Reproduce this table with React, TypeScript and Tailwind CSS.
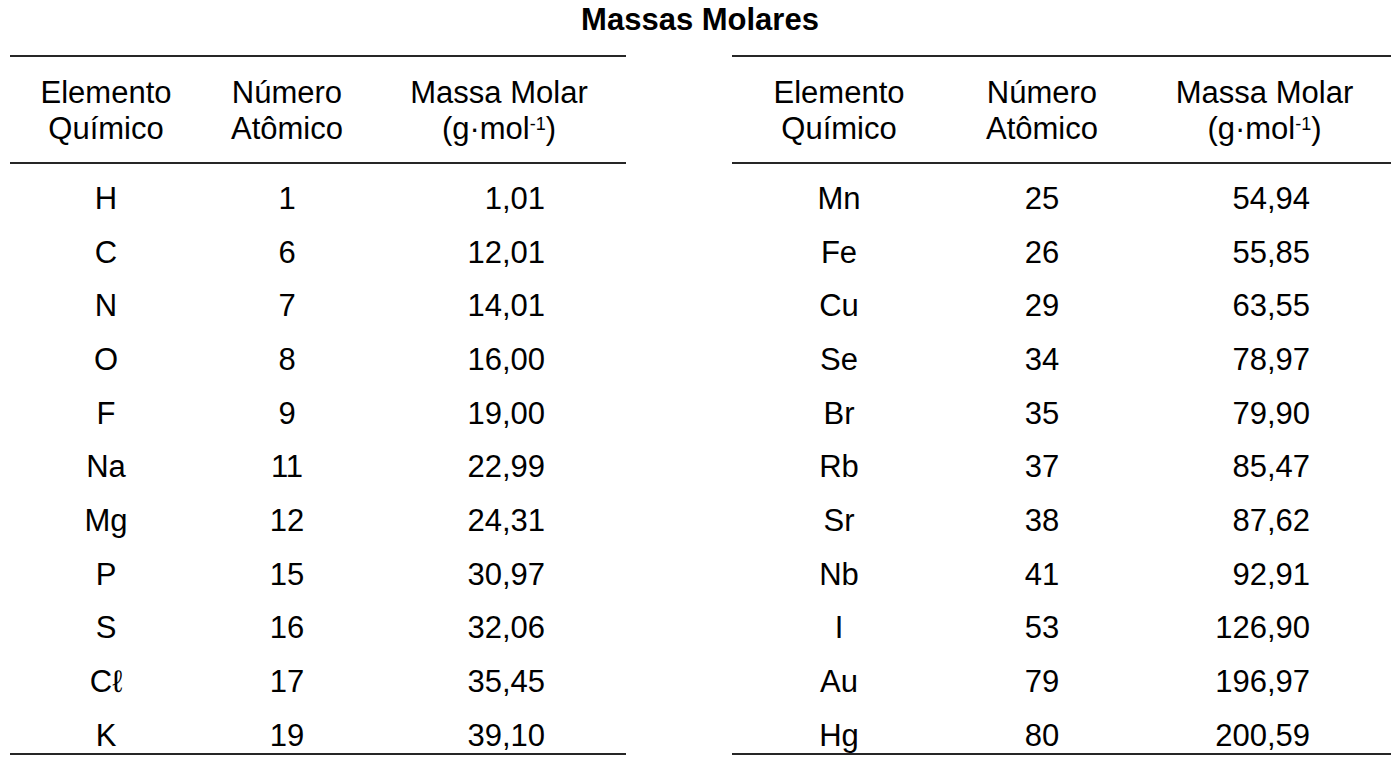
import React from "react";

type Row = { el: string; z: string; mass: string };

const leftRows: Row[] = [
  { el: "H", z: "1", mass: "1,01" },
  { el: "C", z: "6", mass: "12,01" },
  { el: "N", z: "7", mass: "14,01" },
  { el: "O", z: "8", mass: "16,00" },
  { el: "F", z: "9", mass: "19,00" },
  { el: "Na", z: "11", mass: "22,99" },
  { el: "Mg", z: "12", mass: "24,31" },
  { el: "P", z: "15", mass: "30,97" },
  { el: "S", z: "16", mass: "32,06" },
  { el: "C\u2113", z: "17", mass: "35,45" },
  { el: "K", z: "19", mass: "39,10" },
];

const rightRows: Row[] = [
  { el: "Mn", z: "25", mass: "54,94" },
  { el: "Fe", z: "26", mass: "55,85" },
  { el: "Cu", z: "29", mass: "63,55" },
  { el: "Se", z: "34", mass: "78,97" },
  { el: "Br", z: "35", mass: "79,90" },
  { el: "Rb", z: "37", mass: "85,47" },
  { el: "Sr", z: "38", mass: "87,62" },
  { el: "Nb", z: "41", mass: "92,91" },
  { el: "I", z: "53", mass: "126,90" },
  { el: "Au", z: "79", mass: "196,97" },
  { el: "Hg", z: "80", mass: "200,59" },
];

const Rule: React.FC = () => <div className="h-[2px] w-full bg-[#262626]" />;

const MassTable: React.FC<{ rows: Row[]; cols: string; width: string }> = ({
  rows,
  cols,
  width,
}) => {
  return (
    <div className={`${width} flex flex-col`}>
      <Rule />
      <div className={`grid ${cols} pt-[18px] pb-[15px] leading-[36px] text-center`}>
        <div>
          Elemento
          <br />
          Químico
        </div>
        <div>
          Número
          <br />
          Atômico
        </div>
        <div>
          Massa Molar
          <br />
          (g·mol<sup className="text-[18px]">-1</sup>)
        </div>
      </div>
      <Rule />
      <div className="flex flex-col gap-[19.67px] pt-[18px] leading-[34px]">
        {rows.map((r) => (
          <div key={r.el} className={`grid ${cols}`}>
            <div className="text-center">{r.el}</div>
            <div className="text-center">{r.z}</div>
            <div className="text-right pr-[81px]">{r.mass}</div>
          </div>
        ))}
      </div>
      <Rule />
    </div>
  );
};

const App: React.FC = () => {
  return (
    <div className="w-[1400px] h-[762px] bg-white text-black overflow-hidden font-['Liberation_Sans',Arial,sans-serif] text-[31px]">
      <h1 className="pt-[2px] pb-[17px] text-center font-bold leading-[36px]">
        Massas Molares
      </h1>
      <div className="flex pl-[10px]">
        <MassTable
          rows={leftRows}
          width="w-[616px]"
          cols="grid-cols-[192px_170px_254px]"
        />
        <div className="w-[106px] shrink-0" />
        <MassTable
          rows={rightRows}
          width="w-[659px]"
          cols="grid-cols-[214px_192px_253px]"
        />
      </div>
    </div>
  );
};

export default App;
